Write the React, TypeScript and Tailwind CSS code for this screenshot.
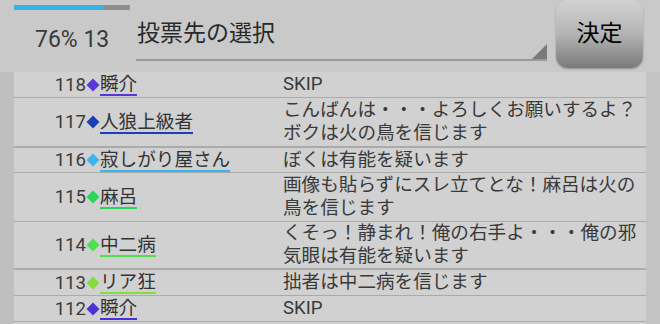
const rows = [
  { no: 118, name: '瞬介', color: '#5a35d8', msg: ['SKIP'], h: 'h-[26px]', b: 'border-b' },
  { no: 117, name: '人狼上級者', color: '#1c3fb8', msg: ['こんばんは・・・よろしくお願いするよ？', 'ボクは火の鳥を信じます'], h: 'h-[50px]', b: 'border-b-2' },
  { no: 116, name: '寂しがり屋さん', color: '#3db4ee', msg: ['ぼくは有能を疑います'], h: 'h-[25px]', b: 'border-b' },
  { no: 115, name: '麻呂', color: '#28d65a', msg: ['画像も貼らずにスレ立てとな！麻呂は火の', '鳥を信じます'], h: 'h-[49px]', b: 'border-b' },
  { no: 114, name: '中二病', color: '#4fdf4f', msg: ['くそっ！静まれ！俺の右手よ・・・俺の邪', '気眼は有能を疑います'], h: 'h-[48px]', b: 'border-b-2' },
  { no: 113, name: 'リア狂', color: '#82df3c', msg: ['拙者は中二病を信じます'], h: 'h-[26px]', b: 'border-b' },
  { no: 112, name: '瞬介', color: '#4a32d8', msg: ['SKIP'], h: 'h-[26px]', b: 'border-b' },
]

export default function App() {
  return (
    <div
      className="w-[660px] h-[324px] overflow-hidden bg-[#c9c9c9] text-[#333] flex flex-col"
      style={{ fontFamily: 'Roboto, "Noto Sans CJK JP", sans-serif' }}
    >
      {/* Header */}
      <div className="flex h-[72px] shrink-0">
        <div className="w-[136px] pl-[14px] pt-[5px] flex flex-col">
          <div className="w-[116px] h-[5px] bg-[#8e8e8e]">
            <div className="w-[89px] h-full bg-[#36b2e4]" />
          </div>
          <div className="pl-[21px] mt-[16px] text-[23px] leading-[28px] text-[#3a3a3a]">76% 13</div>
        </div>
        <div className="relative w-[411px] h-[61px] border-b-2 border-[#999]">
          <div className="pl-[1px] pt-[20px] text-[23px] leading-[28px] text-[#2a2a2a]">投票先の選択</div>
          <svg className="absolute right-0 bottom-0" width="15" height="15" viewBox="0 0 15 15">
            <polygon points="15,0 15,15 0,15" fill="#7a7a7a" />
          </svg>
        </div>
        <button className="ml-[9px] w-[87px] h-[68px] rounded-[12px] bg-gradient-to-b from-[#d2d2d2] via-[#b4b4b4] to-[#7a7a7a] shadow-[0_1px_2px_rgba(0,0,0,0.3)] text-[23px] text-black">
          決定
        </button>
      </div>

      {/* List */}
      <div className="flex flex-1">
        <div className="w-[14px] bg-[#bfbfbf]" />
        <div className="w-[632px] bg-[#d1d1d1] flex flex-col">
          {rows.map((r, i) => (
            <div key={i} className={`flex items-center shrink-0 ${r.h} ${r.b} border-[#aaa]`}>
              <div className="w-[269px] flex items-center">
                <div className="w-[72px] text-right text-[18.6px] leading-[20px] text-[#3c3c3c]">{r.no}</div>
                <svg width="14" height="14" viewBox="0 0 14 14" className="shrink-0">
                  <polygon points="7,0.5 13.5,7 7,13.5 0.5,7" fill={r.color} />
                </svg>
                <div
                  className="text-[18.6px] leading-[20px] pt-[1px] border-b-2 text-[#333]"
                  style={{ borderColor: r.color }}
                >
                  {r.name}
                </div>
              </div>
              <div className="flex-1 text-[18.6px] leading-[23px] text-[#3a3a3a]">
                {r.msg.map((m, j) => (
                  <div key={j}>{m}</div>
                ))}
              </div>
            </div>
          ))}
        </div>
        <div className="flex-1 bg-[#c4c4c4]" />
      </div>
    </div>
  )
}
